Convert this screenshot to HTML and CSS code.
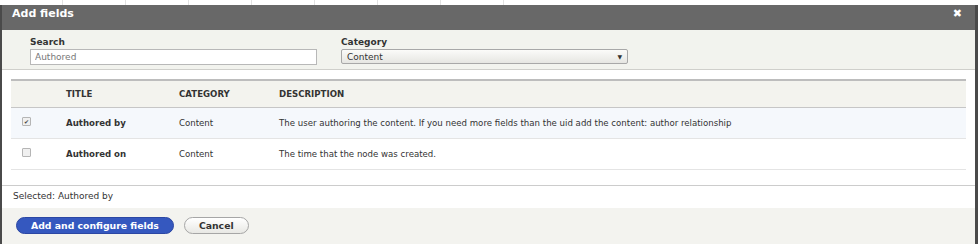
FILE: index.html
```html
<!DOCTYPE html>
<html lang="en">
<head>
    <meta charset="UTF-8">
    <title>Add fields</title>
    <link rel="stylesheet" href="styles.css">
</head>
<body>

    <!-- page behind the dialog -->
    <div class="behind">
        <span></span><span></span><span></span><span></span><span></span><span></span><span></span><span></span>
    </div>

    <div class="dialog">
        <div class="titlebar">
            <span class="title">Add fields</span>
            <span class="close">&#10006;</span>
        </div>

        <div class="filters">
            <div class="filter">
                <label>Search</label>
                <input class="search" type="text" value="Authored">
            </div>
            <div class="filter">
                <label>Category</label>
                <div class="select">Content<span class="arrow">&#9660;</span></div>
            </div>
        </div>

        <div class="content">
            <table>
                <thead>
                    <tr>
                        <th class="col-check"></th>
                        <th class="col-title">Title</th>
                        <th class="col-cat">Category</th>
                        <th>Description</th>
                    </tr>
                </thead>
                <tbody>
                    <tr class="selected">
                        <td class="col-check"><span class="check checked">&#10004;</span></td>
                        <td class="col-title"><b>Authored by</b></td>
                        <td>Content</td>
                        <td>The user authoring the content. If you need more fields than the uid add the content: author relationship</td>
                    </tr>
                    <tr>
                        <td class="col-check"><span class="check"></span></td>
                        <td class="col-title"><b>Authored on</b></td>
                        <td>Content</td>
                        <td>The time that the node was created.</td>
                    </tr>
                </tbody>
            </table>
        </div>

        <div class="selected-list">Selected: Authored by</div>

        <div class="buttons">
            <button class="primary">Add and configure fields</button>
            <button class="cancel">Cancel</button>
        </div>
    </div>

</body>
</html>
```

FILE: styles.css
```css
body {
    margin: 0;
    font-family: "DejaVu Sans", sans-serif;
    font-size: 9px;
    color: #333;
    background-color: white;
}

.behind {
    display: flex;
    height: 5px;
    background-color: #fff;
}

.behind span {
    border-right: 1px solid #e2e2e2;
    width: 62px;
}

.dialog {
    border-left: 2px solid #4a4a4a;
    border-right: 3px solid #4a4a4a;
    background-color: white;
}

.titlebar {
    display: flex;
    justify-content: space-between;
    align-items: flex-start;
    height: 25px;
    padding: 2px 13px 0 10px;
    box-sizing: border-box;
    background-color: #686868;
    color: white;
}

.title {
    font-size: 11px;
    font-weight: bold;
}

.close {
    font-size: 11px;
    font-weight: bold;
}

.filters {
    display: flex;
    gap: 24px;
    height: 40px;
    padding: 7px 28px 0;
    box-sizing: border-box;
    background-color: #f2f3ee;
    border-bottom: 1px solid #cfcfcb;
}

.filter label {
    display: block;
    font-weight: bold;
    margin-bottom: 2px;
}

.search {
    width: 287px;
    height: 16px;
    box-sizing: border-box;
    margin: 0;
    padding: 0 4px;
    border: 1px solid #b8b8b8;
    font-family: "DejaVu Sans", sans-serif;
    font-size: 9px;
    color: #777;
}

.select {
    display: flex;
    justify-content: space-between;
    align-items: center;
    width: 287px;
    height: 15px;
    box-sizing: border-box;
    padding: 0 5px;
    border: 1px solid #a8a8a8;
    border-radius: 2px;
    background: linear-gradient(#fbfbf9, #e6e6e2);
}

.arrow {
    font-size: 6px;
}

.content {
    padding: 9px 9px 15px;
    border-bottom: 1px solid #cccccc;
}

table {
    width: 100%;
    border-collapse: collapse;
    font-size: 8.6px;
}

th {
    text-align: left;
    text-transform: uppercase;
    font-weight: bold;
    height: 26px;
    background-color: #f3f3ee;
    border-top: 2px solid #bdbdbd;
    border-bottom: 1px solid #c6c6c6;
}

td {
    height: 30px;
    border-bottom: 1px solid #e4e4e4;
}

th, td {
    padding: 0;
}

.col-check {
    width: 44px;
    padding-left: 11px;
}

.col-title {
    width: 113px;
}

th.col-title + th {
    width: 100px;
}

tr.selected td {
    background-color: #f5f8fc;
}

td b {
    font-weight: bold;
}

.check {
    display: inline-block;
    width: 7px;
    height: 7px;
    border: 1px solid #b5b5b5;
    border-radius: 1px;
    background-color: #f0f0f0;
    font-size: 6px;
    line-height: 7px;
    text-align: center;
    color: #444;
    vertical-align: middle;
    margin-top: -4px;
}

.selected-list {
    height: 22px;
    padding: 5px 11px 0;
    box-sizing: border-box;
}

.buttons {
    display: flex;
    gap: 10px;
    height: 37px;
    padding: 9px 14px 0;
    box-sizing: border-box;
    background-color: #f3f3ef;
}

.buttons button {
    height: 17px;
    padding: 0 14px;
    border-radius: 10px;
    font-family: "DejaVu Sans", sans-serif;
    font-size: 9.3px;
    font-weight: bold;
    cursor: pointer;
}

.primary {
    background-color: #3558bf;
    border: 1px solid #2c47a3;
    color: white;
}

.cancel {
    background: linear-gradient(#ffffff, #e8e8e4);
    border: 1px solid #a6a6a6;
    color: #333;
    padding: 0 12px;
}
```
